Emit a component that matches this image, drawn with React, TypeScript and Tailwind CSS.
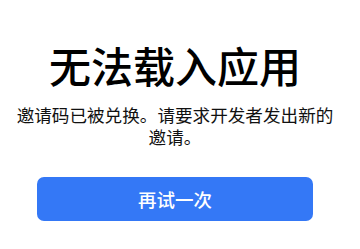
export default function App() {
  return (
    <div
      className="w-[360px] h-[249px] bg-white overflow-hidden"
      style={{ fontFamily: '"Noto Sans CJK SC", "Noto Sans", sans-serif' }}
    >
      <div className="w-[350px] flex flex-col items-center pt-[44px]">
        <h1 className="text-[42px] leading-[42px] font-medium text-black">
          无法载入应用
        </h1>
        <p className="mt-[18px] px-[16px] text-[17.6px] leading-[22px] text-[#111111] text-center">
          邀请码已被兑换。请要求开发者发出新的邀请。
        </p>
        <button className="mt-[29px] w-[276px] h-[44px] rounded-[7px] bg-[#3478f6] text-white text-[18.5px] font-medium leading-[44px]">
          再试一次
        </button>
      </div>
    </div>
  );
}
